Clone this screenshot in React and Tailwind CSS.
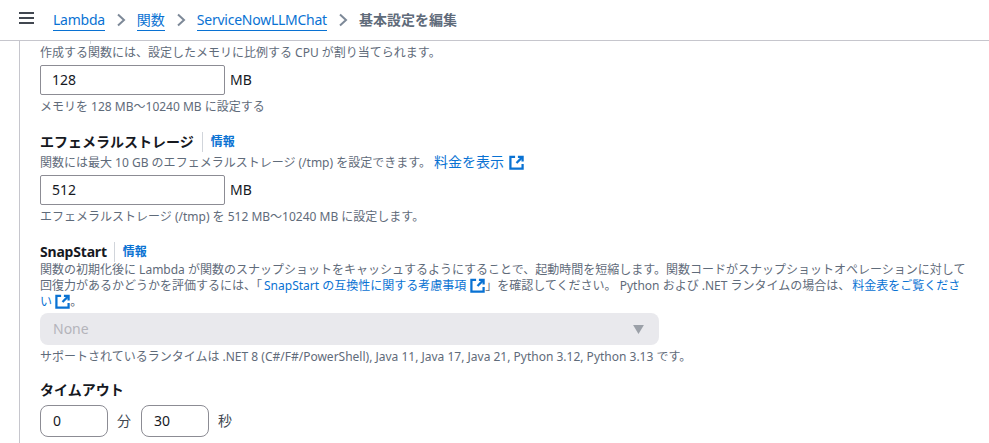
const FONT = "font-['Noto_Sans','Noto_Sans_CJK_JP',sans-serif]";

function Ext({ className = "" }) {
  return (
    <svg viewBox="0 0 16 16" className={`inline-block w-[15px] h-[15px] align-[-3px] ${className}`} fill="none" stroke="#0972d3" strokeWidth="2.4">
      <path d="M6.5 2H1.5v12.5h13V9.5" />
      <path d="M9.5 2h5v5" />
      <path d="M14 2.5L8 8.5" />
    </svg>
  );
}

function Heading({ title, info, latin }) {
  return (
    <div className="flex items-center h-[20px]">
      <span className={`text-[14px] font-bold text-[#16191f] leading-[20px] ${latin ? "tracking-[-0.2px]" : ""}`}>{title}</span>
      {info && (
        <span className={`${latin ? "ml-[7px] pl-[8px]" : "ml-[8px] pl-[8px]"} border-l border-[#d1d5db] text-[12px] font-bold text-[#0972d3] leading-[20px]`}>情報</span>
      )}
    </div>
  );
}

function Field({ value, className = "" }) {
  return (
    <div className={`border border-[#8c8c94] bg-white flex items-center text-[14px] text-[#16191f] ${className}`}>{value}</div>
  );
}

function Chevron() {
  return (
    <svg viewBox="0 0 10 14" className="w-[10px] h-[14px] mx-[11px]" fill="none" stroke="#7d8998" strokeWidth="2">
      <path d="M2 1.5L8 7l-6 5.5" />
    </svg>
  );
}

export default function App() {
  return (
    <div className={`${FONT} w-[989px] h-[443px] overflow-hidden bg-white flex flex-col`}>
      <header className="h-[41px] shrink-0 border-b border-[#c6c6cd] flex items-center">
        <div className="ml-[19px] w-[15px] flex flex-col gap-[3px] -mt-[5px]">
          <span className="h-[2px] bg-[#414750]" />
          <span className="h-[2px] bg-[#414750]" />
          <span className="h-[2px] bg-[#414750]" />
        </div>
        <nav className="ml-[19px] flex items-center text-[14px] leading-[20px] tracking-[-0.25px]">
          <a className="text-[#0972d3] border-b border-[#0972d3]">Lambda</a>
          <Chevron />
          <a className="text-[#0972d3] border-b border-[#0972d3] tracking-normal">関数</a>
          <Chevron />
          <a className="text-[#0972d3] border-b border-[#0972d3]">ServiceNowLLMChat</a>
          <Chevron />
          <span className="text-[#5f6b7a] font-bold tracking-normal">基本設定を編集</span>
        </nav>
      </header>
      <div className="flex-1 min-h-0 flex">
        <div className="ml-[19px] w-[1px] bg-[#c6c6cd] shrink-0" />
        <main className="relative ml-[20px] w-[930px] text-[12px] leading-[16px] text-[#5f6b7a]">
          <span className="absolute left-[50px] top-0 w-[1px] h-[3px] bg-[#d1d5db]" />
          <p className="mt-[4px]">作成する関数には、設定したメモリに比例する CPU が割り当てられます。</p>
          <div className="mt-[4px] flex items-center">
            <Field value="128" className="w-[185px] h-[30px] rounded-[2px] pl-[11px]" />
            <span className="ml-[5px] text-[14px] text-[#16191f]">MB</span>
          </div>
          <p className="mt-[4px]">メモリを 128 MB～10240 MB に設定する</p>

          <div className="mt-[17px]"><Heading title="エフェメラルストレージ" info /></div>
          <p className="mt-[2px]">関数には最大 10 GB のエフェメラルストレージ (/tmp) を設定できます。<span className="ml-[3px] text-[#0972d3] text-[14px]">料金を表示 <Ext className="ml-[1px]" /></span></p>
          <div className="mt-[4px] flex items-center">
            <Field value="512" className="w-[185px] h-[30px] rounded-[2px] pl-[11px]" />
            <span className="ml-[5px] text-[14px] text-[#16191f]">MB</span>
          </div>
          <p className="mt-[4px]">エフェメラルストレージ (/tmp) を 512 MB～10240 MB に設定します。</p>

          <div className="mt-[17px]"><Heading title="SnapStart" info latin /></div>
          <p>
            関数の初期化後に Lambda が関数のスナップショットをキャッシュするようにすることで、起動時間を短縮します。関数コードがスナップショットオペレーションに対して回復力があるかどうかを評価するには、「<span className="ml-[2px] text-[#0972d3]">SnapStart の互換性に関する考慮事項 <Ext className="ml-[1px]" /></span>」を確認してください。 Python および .NET ランタイムの場合は、<span className="ml-[2px] text-[#0972d3]">料金表をご覧ください <Ext /></span>。
          </p>
          <div className="mt-[3px] w-[619px] h-[32px] rounded-[8px] bg-[#e9e9ed] flex items-center justify-between pl-[13px] pr-[15px]">
            <span className="text-[14px] text-[#b4b4bb]">None</span>
            <svg viewBox="0 0 12 10" className="w-[11px] h-[9px]"><path d="M0 0h12L6 10z" fill="#9ba0a8" /></svg>
          </div>
          <p className="mt-[4px]">サポートされているランタイムは .NET 8 (C#/F#/PowerShell), Java 11, Java 17, Java 21, Python 3.12, Python 3.13 です。</p>

          <div className="mt-[15px]"><Heading title="タイムアウト" /></div>
          <div className="mt-[5px] flex items-center">
            <Field value="0" className="w-[68px] h-[32px] rounded-[8px] pl-[12px]" />
            <span className="ml-[9px] w-[24px] text-[14px] text-[#414750]">分</span>
            <Field value="30" className="w-[68px] h-[32px] rounded-[8px] pl-[12px]" />
            <span className="ml-[9px] text-[14px] text-[#414750]">秒</span>
          </div>
        </main>
      </div>
    </div>
  );
}
